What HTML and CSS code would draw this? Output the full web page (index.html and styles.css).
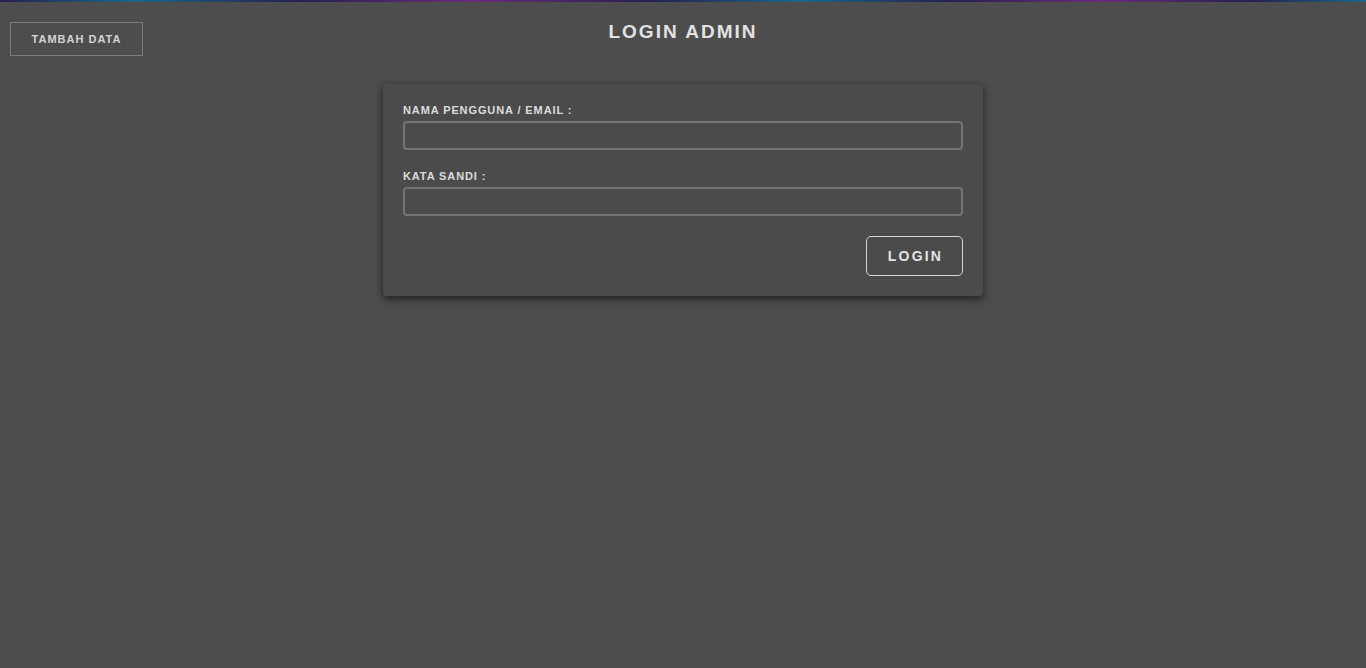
FILE: index.html
```html
<!DOCTYPE html>
<html lang="id">
<head>
<meta charset="utf-8">
<title>Login Admin</title>
<link rel="stylesheet" href="styles.css">
</head>
<body>
<div class="topbar"></div>
<header class="header">
  <button class="add-btn" type="button">TAMBAH DATA</button>
  <h1 class="title">LOGIN ADMIN</h1>
</header>
<main class="main">
  <form class="card">
    <label class="label" for="user">NAMA PENGGUNA / EMAIL :</label>
    <input class="input" id="user" type="text">
    <label class="label label-second" for="pass">KATA SANDI :</label>
    <input class="input" id="pass" type="password">
    <div class="actions">
      <button class="login-btn" type="button">LOGIN</button>
    </div>
  </form>
</main>
</body>
</html>
```
FILE: styles.css
```css
* { box-sizing: border-box; }
html, body { margin: 0; padding: 0; }
body {
  background: #4d4d4d;
  font-family: "Liberation Sans", Arial, sans-serif;
  color: #dcdcdc;
  min-height: 668px;
}
.topbar {
  height: 2px;
  background: linear-gradient(90deg,
    #26204f 0px, #1b6786 130px, #26204f 300px, #6a2c78 470px,
    #26204f 650px, #1b6786 800px, #26204f 950px, #6a2c78 1100px,
    #26204f 1250px, #1b6786 1366px);
}
.header {
  position: relative;
  height: 54px;
  display: flex;
  justify-content: center;
}
.add-btn {
  position: absolute;
  left: 10px;
  top: 20px;
  width: 133px;
  height: 34px;
  background: transparent;
  border: 1px solid #7a7a7a;
  color: #d4d4d4;
  font-family: inherit;
  font-weight: bold;
  font-size: 11px;
  letter-spacing: 1px;
  padding: 0;
  cursor: pointer;
}
.title {
  margin: 19px 0 0;
  font-size: 19px;
  font-weight: bold;
  letter-spacing: 2px;
  color: #e2e2e2;
  line-height: 22px;
}
.main {
  display: flex;
  justify-content: center;
  padding-top: 28px;
}
.card {
  width: 600px;
  background: #4b4b4b;
  border-radius: 4px;
  box-shadow: 0 3px 8px rgba(0,0,0,0.6);
  padding: 20px;
  display: flex;
  flex-direction: column;
}
.label {
  font-size: 11px;
  font-weight: bold;
  letter-spacing: 0.9px;
  color: #dcdcdc;
  line-height: 12px;
  margin-bottom: 5px;
}
.label-second { margin-top: 20px; }
.input {
  width: 560px;
  height: 29px;
  border: 2px solid #757575;
  border-radius: 4px;
  background: #4b4b4b;
  color: #ddd;
  outline: none;
  padding: 0 8px;
}
.actions {
  display: flex;
  justify-content: flex-end;
  margin-top: 20px;
}
.login-btn {
  width: 97px;
  height: 40px;
  background: transparent;
  border: 1px solid #d8d8d8;
  border-radius: 5px;
  color: #e4e4e4;
  font-family: inherit;
  font-weight: bold;
  font-size: 14px;
  letter-spacing: 2.2px;
  padding: 0 0 0 2px;
  cursor: pointer;
}
```
